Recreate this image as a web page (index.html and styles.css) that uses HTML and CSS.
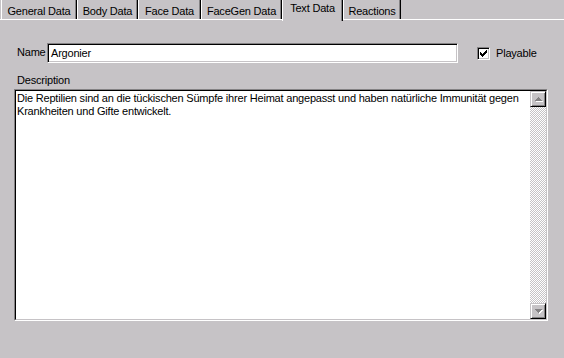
FILE: index.html
```html
<!DOCTYPE html>
<html>
<head>
<meta charset="utf-8">
<link rel="stylesheet" href="styles.css">
</head>
<body>
<div class="window">
  <div class="tabs">
    <div class="tab tab-general">General Data</div>
    <div class="tab tab-body">Body Data</div>
    <div class="tab tab-face">Face Data</div>
    <div class="tab tab-facegen">FaceGen Data</div>
    <div class="tab tab-text active">Text Data</div>
    <div class="tab tab-reactions">Reactions</div>
  </div>
  <div class="panel">
    <div class="name-row">
      <span class="name-label">Name</span>
      <div class="field">Argonier</div>
      <div class="check">
        <span class="check-box">
          <svg width="7" height="7" viewBox="0 0 7 7" shape-rendering="crispEdges">
            <rect x="0" y="2" width="1" height="3" fill="#000"/>
            <rect x="1" y="3" width="1" height="3" fill="#000"/>
            <rect x="2" y="4" width="1" height="3" fill="#000"/>
            <rect x="3" y="3" width="1" height="3" fill="#000"/>
            <rect x="4" y="2" width="1" height="3" fill="#000"/>
            <rect x="5" y="1" width="1" height="3" fill="#000"/>
            <rect x="6" y="0" width="1" height="3" fill="#000"/>
          </svg>
        </span>
        <span class="check-label">Playable</span>
      </div>
    </div>
    <div class="desc-label">Description</div>
    <div class="memo">
      <div class="memo-inner">
        <div class="memo-text">Die Reptilien sind an die tückischen Sümpfe ihrer Heimat angepasst und haben natürliche Immunität gegen Krankheiten und Gifte entwickelt.</div>
        <div class="scrollbar">
          <div class="sb-btn">
            <svg width="9" height="6" viewBox="0 0 9 6" shape-rendering="crispEdges">
              <polygon points="1,5 8,5 4.5,1" fill="#fff" transform="translate(1,1)"/>
              <polygon points="1,5 8,5 4.5,1" fill="#848284"/>
            </svg>
          </div>
          <div class="sb-track"></div>
          <div class="sb-btn">
            <svg width="9" height="6" viewBox="0 0 9 6" shape-rendering="crispEdges">
              <polygon points="1,1 8,1 4.5,5" fill="#fff" transform="translate(1,1)"/>
              <polygon points="1,1 8,1 4.5,5" fill="#848284"/>
            </svg>
          </div>
        </div>
      </div>
    </div>
  </div>
</div>
</body>
</html>
```
FILE: styles.css
```css
html, body {
  margin: 0;
  padding: 0;
}
body {
  background: #c6c3c6;
  font-family: "Liberation Sans", Arial, sans-serif;
  font-size: 11px;
  line-height: 13px;
  letter-spacing: -0.2px;
  color: #000;
  width: 564px;
  height: 358px;
  overflow: hidden;
}
.window {
  width: 564px;
  height: 358px;
}
.tabs {
  display: flex;
  height: 19px;
  padding-left: 1px;
  align-items: flex-start;
}
.tab {
  flex: none;
  box-sizing: border-box;
  height: 19px;
  padding-top: 5px;
  text-align: center;
  white-space: nowrap;
  border-left: 1px solid #fff;
  border-right: 1px solid #000;
  box-shadow: inset -1px 0 #848284;
}
.tab.active {
  position: relative;
  z-index: 1;
  height: 21px;
  padding-top: 2px;
  background: #c6c3c6;
}
.tab-general { width: 76px; }
.tab-body { width: 61px; }
.tab-face { width: 63px; }
.tab-facegen { width: 81px; }
.tab-text { width: 61px; }
.tab-reactions { width: 58px; }

.panel {
  border-top: 1px solid #fff;
  height: 338px;
}
.name-row {
  display: flex;
  align-items: center;
  margin-top: 23px;
  height: 20px;
  padding-left: 17px;
}
.name-label {
  width: 30px;
  flex: none;
  padding-bottom: 1px;
}
.field {
  box-sizing: border-box;
  width: 411px;
  height: 20px;
  background: #fff;
  border: 1px solid;
  border-color: #848284 #fff #fff #848284;
  box-shadow: inset 1px 1px #000, inset -1px -1px #c6c3c6;
  padding: 3px 0 0 3px;
}
.check {
  display: flex;
  align-items: center;
  margin-left: 19px;
  margin-top: 1px;
}
.check-box {
  box-sizing: border-box;
  width: 13px;
  height: 13px;
  background: #fff;
  border: 1px solid;
  border-color: #848284 #fff #fff #848284;
  box-shadow: inset 1px 1px #000, inset -1px -1px #c6c3c6;
  display: flex;
  padding: 2px 0 0 2px;
}
.check-box svg {
  display: block;
}
.check-label {
  margin-left: 6px;
}
.desc-label {
  margin-top: 11px;
  padding-left: 17px;
  height: 15px;
}
.memo {
  box-sizing: border-box;
  margin-left: 14px;
  width: 534px;
  height: 232px;
  border: 1px solid;
  border-color: #848284 #fff #fff #848284;
}
.memo-inner {
  box-sizing: border-box;
  height: 100%;
  border: 1px solid;
  border-color: #000 #c6c3c6 #c6c3c6 #000;
  background: #fff;
  display: flex;
}
.memo-text {
  flex: 1;
  padding: 1px 0 0 1px;
}
.scrollbar {
  width: 16px;
  flex: none;
  display: flex;
  flex-direction: column;
}
.sb-btn {
  box-sizing: border-box;
  width: 16px;
  height: 16px;
  flex: none;
  background: #c6c3c6;
  border: 1px solid;
  border-color: #c6c3c6 #000 #000 #c6c3c6;
  box-shadow: inset 1px 1px #fff, inset -1px -1px #848284;
  display: flex;
  align-items: center;
  justify-content: center;
}
.sb-btn svg {
  display: block;
}
.sb-track {
  flex: 1;
  background: repeating-conic-gradient(#fff 0 25%, #c6c3c6 0 50%) 0 0 / 2px 2px;
}
```
